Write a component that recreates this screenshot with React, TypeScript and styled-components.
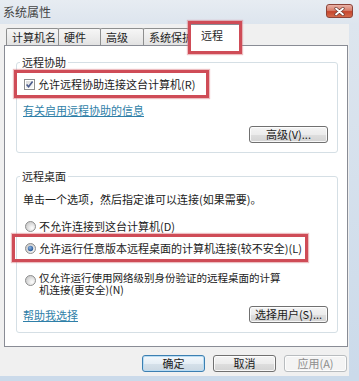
import styled, { createGlobalStyle } from 'styled-components';

const GlobalStyle = createGlobalStyle`
  html, body {
    margin: 0;
    padding: 0;
    background: #cbdaea;
  }
  body {
    font-family: "Noto Sans CJK SC", "Noto Sans", sans-serif;
  }
`;

const RED = '#cf4c57';

export default function App() {
  return (
    <Frame>
      <GlobalStyle />
      <TitleBar>
        <Title>系统属性</Title>
        <CloseButton>
          <svg width="11" height="9" viewBox="0 0 11 9">
            <path
              d="M2 1.5 L9 7.5 M9 1.5 L2 7.5"
              stroke="#6b3a33"
              strokeWidth="3.2"
              strokeLinecap="round"
            />
            <path
              d="M2 1.5 L9 7.5 M9 1.5 L2 7.5"
              stroke="#ffffff"
              strokeWidth="1.8"
              strokeLinecap="round"
            />
          </svg>
        </CloseButton>
      </TitleBar>

      <Body>
        <Client>
          <TabStrip>
            <Tab $width={53}>计算机名</Tab>
            <Tab $width={43}>硬件</Tab>
            <Tab $width={44}>高级</Tab>
            <Tab $width={46}>系统保护</Tab>
            <ActiveTab>远程</ActiveTab>
          </TabStrip>

          <Panel>
            <Group>
              <GroupTitle>远程协助</GroupTitle>
              <Highlight $width={195} $shift={-9} $pad={7}>
                <CheckBox />
                <Label>允许远程协助连接这台计算机(R)</Label>
              </Highlight>
              <LinkText>有关启用远程协助的信息</LinkText>
              <ButtonRow>
                <Button $width={79}>高级(V)...</Button>
              </ButtonRow>
            </Group>

            <Group $gap={23}>
              <GroupTitle>远程桌面</GroupTitle>
              <Desc>单击一个选项，然后指定谁可以连接(如果需要)。</Desc>
              <RadioRow $gap={13}>
                <Radio />
                <Label>不允许连接到这台计算机(D)</Label>
              </RadioRow>
              <Highlight $width={296} $shift={-11} $pad={10}>
                <Radio checked />
                <Label>允许运行任意版本远程桌面的计算机连接(较不安全)(L)</Label>
              </Highlight>
              <RadioRow $gap={10} $top>
                <Radio />
                <WrapLabel>仅允许运行使用网络级别身份验证的远程桌面的计算机连接(更安全)(N)</WrapLabel>
              </RadioRow>
              <FooterRow>
                <LinkText $flat>帮助我选择</LinkText>
                <Button $width={79}>选择用户(S)...</Button>
              </FooterRow>
            </Group>
          </Panel>

          <DialogButtons>
            <Button $width={63} $primary>确定</Button>
            <Button $width={63}>取消</Button>
            <Button $width={63} $disabled>应用(A)</Button>
          </DialogButtons>
        </Client>
      </Body>
    </Frame>
  );
}

function CheckBox() {
  return (
    <svg width="11" height="11" viewBox="0 0 11 11">
      <defs>
        <linearGradient id="cbfill" x1="0" y1="0" x2="1" y2="1">
          <stop offset="0" stopColor="#d8d8d8" />
          <stop offset="1" stopColor="#fbfbfb" />
        </linearGradient>
      </defs>
      <rect x="0.5" y="0.5" width="10" height="10" fill="#fff" stroke="#8e8f8f" />
      <rect x="2" y="2" width="7" height="7" fill="url(#cbfill)" />
      <path d="M2.6 5.4 L4.6 7.8 L8.6 2.6" fill="none" stroke="#4a5b8c" strokeWidth="1.6" />
    </svg>
  );
}

function Radio({ checked = false }: { checked?: boolean }) {
  const id = checked ? 'rdon' : 'rdoff';
  return (
    <svg width="11" height="11" viewBox="0 0 11 11">
      <defs>
        <radialGradient id={id + 'bg'} cx="0.65" cy="0.65" r="0.6">
          <stop offset="0" stopColor="#ffffff" />
          <stop offset="1" stopColor="#cfcfcf" />
        </radialGradient>
        <radialGradient id={id + 'dot'} cx="0.4" cy="0.35" r="0.7">
          <stop offset="0" stopColor="#8ab4e4" />
          <stop offset="1" stopColor="#1f4f8e" />
        </radialGradient>
      </defs>
      <circle cx="5.5" cy="5.5" r="5" fill={`url(#${id}bg)`} stroke="#8e8f8f" />
      {checked && <circle cx="5.5" cy="5.5" r="2.7" fill={`url(#${id}dot)`} />}
    </svg>
  );
}

const Frame = styled.div`
  width: 359px;
  height: 381px;
  box-sizing: border-box;
  display: flex;
  flex-direction: column;
  padding-bottom: 5px;
  background: #cbdaea;
  overflow: hidden;
`;

const TitleBar = styled.div`
  height: 24px;
  flex: none;
  display: flex;
  justify-content: space-between;
  align-items: flex-start;
  background: linear-gradient(180deg, #e7ecf2 0%, #dde5ee 100%);
`;

const Title = styled.div`
  padding: 4px 0 0 3px;
  font-size: 12px;
  line-height: 16px;
  color: #454545;
`;

const CloseButton = styled.div`
  margin: 4px 6px 0 0;
  width: 27px;
  height: 14px;
  box-sizing: border-box;
  border: 1px solid #8c4338;
  border-radius: 3px;
  display: flex;
  align-items: center;
  justify-content: center;
  background: linear-gradient(180deg, #e9b3a8 0%, #d8806d 45%, #c5452d 55%, #d46a4b 100%);
`;

const Body = styled.div`
  flex: 1;
  display: flex;
  padding-right: 10px;
  background: linear-gradient(180deg, #dde5ee 0%, #cbdaea 100%);
`;

const Client = styled.div`
  flex: 1;
  display: flex;
  flex-direction: column;
  padding: 0 1px 4px 4px;
  background: #f0f0f0;
`;

const TabStrip = styled.div`
  height: 22px;
  flex: none;
  display: flex;
  align-items: flex-end;
  padding-left: 2px;
  margin-bottom: -1px;
`;

const Tab = styled.div<{ $width: number }>`
  width: ${(p) => p.$width}px;
  height: 18px;
  box-sizing: border-box;
  margin-left: -1px;
  padding: 0 5px;
  border: 1px solid #8e8f8f;
  border-bottom: none;
  border-radius: 2px 2px 0 0;
  background: linear-gradient(180deg, #f6f6f6 0%, #ececec 50%, #e1e1e1 100%);
  font-size: 11px;
  line-height: 16px;
  color: #1e1e1e;
  white-space: nowrap;

  &:first-child {
    margin-left: 0;
  }
`;

const ActiveTab = styled.div`
  position: relative;
  z-index: 2;
  width: 53px;
  height: 22px;
  box-sizing: border-box;
  margin-left: -1px;
  padding-left: 12px;
  border: 1px solid #898c95;
  border-bottom: none;
  border-radius: 2px 2px 0 0;
  background: #fff;
  font-size: 11px;
  line-height: 20px;
  color: #1e1e1e;

  &::after {
    content: '';
    position: absolute;
    top: -4px;
    left: -1px;
    right: -2px;
    bottom: -8px;
    border: 3px solid ${RED};
    box-shadow: 0 0 1px 1px rgba(214, 110, 118, 0.45);
  }
`;

const Panel = styled.div`
  position: relative;
  z-index: 1;
  flex: none;
  display: flex;
  flex-direction: column;
  padding: 16px 9px 13px 11px;
  border: 1px solid #898c95;
  background: #fff;
`;

const Group = styled.div<{ $gap?: number }>`
  display: flex;
  flex-direction: column;
  margin-top: ${(p) => p.$gap ?? 0}px;
  padding: 0 9px 9px 6px;
  border: 1px solid #d5dfe5;
  border-radius: 3px;
`;

const GroupTitle = styled.div`
  align-self: flex-start;
  margin: -8px 0 0 -3px;
  padding: 0 2px;
  background: #fff;
  font-size: 11px;
  line-height: 14px;
  color: #1e1e1e;
`;

const Highlight = styled.div<{ $width: number; $shift: number; $pad: number }>`
  align-self: flex-start;
  display: flex;
  align-items: center;
  gap: 3px;
  box-sizing: border-box;
  width: ${(p) => p.$width}px;
  height: 28px;
  margin: 1px 0 0 ${(p) => p.$shift}px;
  padding-left: ${(p) => p.$pad}px;
  border: 3px solid ${RED};
  box-shadow: 0 0 1px 1px rgba(214, 110, 118, 0.45);
`;

const Label = styled.span`
  font-size: 11px;
  line-height: 14px;
  color: #1b1b1b;
  white-space: nowrap;
`;

const WrapLabel = styled.span`
  flex: none;
  width: 245px;
  font-size: 10.5px;
  line-height: 12px;
  color: #1b1b1b;
`;

const LinkText = styled.span<{ $flat?: boolean }>`
  margin-top: ${(p) => (p.$flat ? 0 : 5)}px;
  font-size: 11px;
  line-height: 14px;
  color: #2f7fa8;
  text-decoration: underline;
  align-self: ${(p) => (p.$flat ? 'center' : 'flex-start')};
`;

const Desc = styled.div`
  margin-top: 9px;
  font-size: 11px;
  line-height: 14px;
  color: #1b1b1b;
`;

const RadioRow = styled.div<{ $gap: number; $top?: boolean }>`
  display: flex;
  align-items: ${(p) => (p.$top ? 'flex-start' : 'center')};
  gap: 3px;
  margin-top: ${(p) => p.$gap}px;
  padding-left: 2px;

  & > svg {
    flex: none;
    margin-top: ${(p) => (p.$top ? 3 : 0)}px;
  }
`;

const ButtonRow = styled.div`
  display: flex;
  justify-content: flex-end;
  margin-top: 9px;
`;

const FooterRow = styled.div`
  display: flex;
  justify-content: space-between;
  align-items: center;
  margin-top: 10px;
`;

const Button = styled.div<{ $width: number; $primary?: boolean; $disabled?: boolean }>`
  width: ${(p) => p.$width}px;
  height: 17px;
  box-sizing: border-box;
  border: 1px solid ${(p) => (p.$primary ? '#3c7fb1' : p.$disabled ? '#b8bcbf' : '#707070')};
  border-radius: 3px;
  background: ${(p) =>
    p.$disabled
      ? '#f4f4f4'
      : p.$primary
      ? 'linear-gradient(180deg, #f3f8fc 0%, #e6eef5 50%, #d6e1ea 51%, #cbd7e2 100%)'
      : 'linear-gradient(180deg, #f4f4f4 0%, #ececec 50%, #dedede 51%, #d3d3d3 100%)'};
  box-shadow: inset 0 0 0 1px ${(p) => (p.$primary ? '#b9dcf3' : 'rgba(255,255,255,0.8)')};
  font-size: 11px;
  line-height: 15px;
  text-align: center;
  color: ${(p) => (p.$disabled ? '#8d8d8d' : '#1b1b1b')};
  white-space: nowrap;
`;

const DialogButtons = styled.div`
  display: flex;
  justify-content: flex-end;
  gap: 8px;
  margin-top: 8px;
  padding-right: 1px;
`;
